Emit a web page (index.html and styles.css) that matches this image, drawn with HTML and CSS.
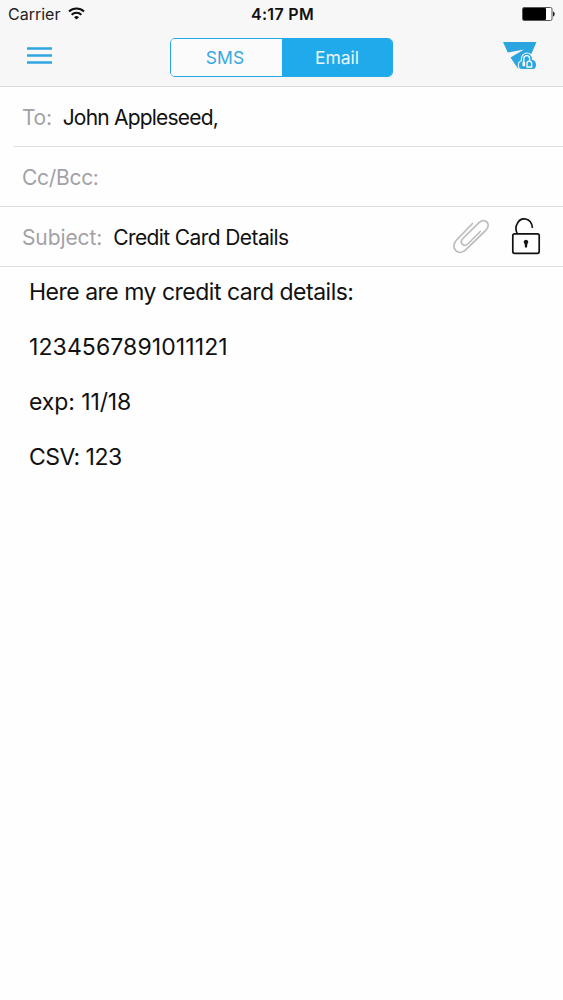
FILE: index.html
```html
<!DOCTYPE html>
<html lang="en">
<head>
  <meta charset="UTF-8">
  <title>New Email</title>
  <link rel="stylesheet" href="styles.css">
</head>
<body>

  <header class="header">
    <div class="status-bar">
      <div class="carrier">
        <span>Carrier</span>
        <svg class="wifi" width="17" height="13" viewBox="0 0 17 13">
          <path d="M1 4.5a10.8 10.8 0 0 1 15 0M3.6 7.7a7 7 0 0 1 9.8 0" fill="none" stroke="#111" stroke-width="2"/>
          <path d="M8.5 12.6L6 10.2a3.6 3.6 0 0 1 5 0z" fill="#111"/>
        </svg>
      </div>
      <div class="time">4:17 PM</div>
      <svg class="battery" width="33" height="14" viewBox="0 0 33 14">
        <rect x=".5" y=".5" width="29.5" height="13" rx="1.5" fill="#fff" stroke="#555"/>
        <rect x="1" y="1" width="23" height="12" rx="1" fill="#000"/>
        <path d="M31 4.5c2.3.5 2.3 4.5 0 5z" fill="#222"/>
      </svg>
    </div>

    <div class="toolbar">
      <button class="icon-button menu" aria-label="Menu">
        <svg width="25" height="17" viewBox="0 0 25 17">
          <path d="M0 1.5h25M0 8.5h25M0 15.5h25" stroke="#2fa6df" stroke-width="2.6"/>
        </svg>
      </button>
      <div class="tabs">
        <button class="tab">SMS</button>
        <button class="tab active">Email</button>
      </div>
      <button class="icon-button send" aria-label="Send secure">
        <svg width="34" height="28" viewBox="0 0 34 28">
          <path d="M0 0H33.5L27 15L18 27.5L14.5 26L7.5 15.5L21 7.5L4.8 10.5Z" fill="#2aa5e0"/>
          <path d="M19 27.6C14.2 27.6 14.2 19.8 18.4 18.7C17.4 9 29.4 8.4 29.7 17.5C35 18.6 34.5 27.6 30 27.6Z" fill="#2aa5e0" stroke="#f7f7f8" stroke-width="1.1"/>
          <path d="M20.8 23.6v-7a2.9 2.9 0 0 1 5.8 0v2.2" fill="none" stroke="#fff" stroke-width="1.3"/>
          <path d="M19.5 19.8h2.6v4.4h-2.6z" fill="#fff"/>
          <path d="M24 25v-3.5a2.3 2.3 0 0 1 4.6 0V25z" fill="none" stroke="#fff" stroke-width="1.3"/>
        </svg>
      </button>
    </div>
  </header>

  <main>
    <div class="field to">
      <span class="label">To:</span>
      <span class="value">John Appleseed,</span>
    </div>
    <div class="field cc">
      <span class="label">Cc/Bcc:</span>
    </div>
    <div class="field subject">
      <span class="label">Subject:</span>
      <span class="value">Credit Card Details</span>
      <div class="actions">
        <svg width="38" height="36" viewBox="0 0 38 36">
          <path d="M20.5 4.5L4.1 21.5C-2.3 29 6.5 38 13.9 30.7L33.8 11.3C39.8 5 33-2.2 26.7 3.8L10.9 19.5C6.8 24 12 28.7 16.3 24.5L28.3 12.5" fill="none" stroke="#bcbcbc" stroke-width="1.7" stroke-linecap="round"/>
        </svg>
        <svg width="30" height="38" viewBox="0 0 30 38">
          <rect x="1.8" y="15.8" width="26.4" height="19.6" rx="1.8" fill="none" stroke="#111" stroke-width="1.7"/>
          <path d="M6.2 15.5C4.6 12.2 4.6 8.5 6.1 5.8C9.8-1.8 20.2-.8 21.5 9.8" fill="none" stroke="#111" stroke-width="1.7"/>
          <path d="M15 21.7a2.3 2.3 0 0 1 1.4 4.1L16 29.5h-2l-.4-3.7A2.3 2.3 0 0 1 15 21.7z" fill="#111"/>
        </svg>
      </div>
    </div>

    <div class="message">
      <p>Here are my credit card details:</p>
      <p class="number">1234567891011121</p>
      <p class="expiry">exp: 11/18</p>
      <p class="csv">CSV: 123</p>
    </div>
  </main>

</body>
</html>
```
FILE: styles.css
```css
* {
  box-sizing: border-box;
}

body {
  margin: 0;
  min-height: 1000px;
  font-family: Inter, "Liberation Sans", sans-serif;
  background: #fefefe;
  color: #111;
}

.header {
  height: 87px;
  background: #f7f7f8;
  border-bottom: 1px solid #d8d8d9;
}

.status-bar {
  display: grid;
  grid-template-columns: 1fr auto 1fr;
  align-items: center;
  height: 28px;
  padding: 0 8px;
  font-size: 16px;
}

.carrier {
  display: flex;
  align-items: center;
  gap: 8px;
  color: #222;
}

.wifi {
  margin-top: -2px;
}

.time {
  margin-left: 2px;
  font-weight: 600;
  letter-spacing: 0.3px;
}

.battery {
  justify-self: end;
}

.toolbar {
  display: flex;
  align-items: center;
  justify-content: space-between;
  height: 58px;
  padding: 0 26px 0 27px;
}

.icon-button {
  display: flex;
  width: 34px;
  padding: 0;
  border: 0;
  background: none;
}

.menu {
  width: 32px;
  padding-bottom: 3px;
}

.send {
  padding-bottom: 2px;
}

.tabs {
  display: flex;
  width: 223px;
  height: 39px;
  border: 1.5px solid #22a9e8;
  border-radius: 5px;
  overflow: hidden;
}

.tab {
  flex: 1;
  padding: 0 2px 0 0;
  border: 0;
  background: #fbfbfc;
  color: #35a9df;
  font-family: inherit;
  font-size: 17.5px;
}

.tab.active {
  padding: 0 0 0 1px;
  background: #20aaeb;
  color: #e9f8ff;
}

.field {
  display: flex;
  align-items: center;
  height: 60px;
  padding: 1px 22px 0;
  border-bottom: 1px solid #dededf;
  font-size: 21px;
  letter-spacing: -0.3px;
}

.to {
  margin-left: 14px;
  padding-left: 8px;
}

.to .value {
  letter-spacing: -0.8px;
}

.label {
  margin-right: 11px;
  color: #a3a1a6;
}

.subject .label {
  letter-spacing: -0.1px;
}

.subject .value {
  letter-spacing: -0.6px;
}

.actions {
  display: flex;
  align-items: center;
  gap: 21px;
  margin-left: auto;
}

.message {
  padding: 11px 28px 11px 29px;
  font-size: 23px;
  line-height: 28px;
}

.message p {
  margin: 0 0 27px;
  letter-spacing: -0.5px;
}

.message .number {
  letter-spacing: 0.1px;
}

.message .expiry {
  letter-spacing: -0.1px;
}
```
